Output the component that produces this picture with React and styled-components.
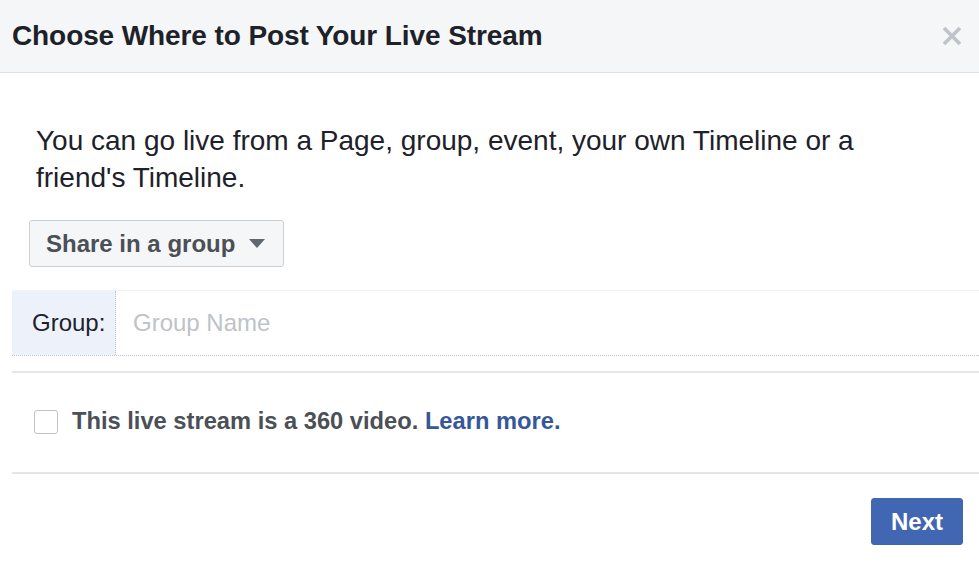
import styled, { createGlobalStyle } from "styled-components";

const Global = createGlobalStyle`
  body {
    margin: 0;
    background: #fff;
    font-family: "Liberation Sans", Arial, sans-serif;
    color: #1d2129;
  }
`;

const Dialog = styled.div`
  width: 979px;
  height: 562px;
  overflow: hidden;
  background: #fff;
`;

const Header = styled.div`
  height: 72px;
  display: flex;
  align-items: center;
  justify-content: space-between;
  padding: 0 16px 0 12px;
  background: #f5f6f7;
  border-bottom: 1px solid #dddfe2;
`;

const Title = styled.h1`
  margin: 0;
  font-size: 28px;
  font-weight: bold;
  color: #1d2129;
  letter-spacing: -0.1px;
`;

const Close = styled.button`
  border: none;
  background: none;
  padding: 0;
  width: 22px;
  height: 22px;
  display: flex;
  align-items: center;
  justify-content: center;
  cursor: pointer;
`;

const Body = styled.div`
  padding-left: 12px;
`;

const Intro = styled.p`
  margin: 49px 0 0 24px;
  font-size: 28px;
  line-height: 37px;
  color: #1d2129;
`;

const Dropdown = styled.button`
  margin: 24px 0 0 17px;
  height: 47px;
  padding: 0 18px 0 16px;
  display: inline-flex;
  align-items: center;
  gap: 14px;
  background: #f5f6f7;
  border: 1px solid #ccd0d5;
  border-radius: 3px;
  font-family: inherit;
  font-size: 24px;
  font-weight: bold;
  color: #4b4f56;
`;

const Caret = styled.span`
  width: 0;
  height: 0;
  border-left: 8px solid transparent;
  border-right: 8px solid transparent;
  border-top: 9px solid #606770;
`;

const FieldRow = styled.div`
  margin-top: 23px;
  display: flex;
  height: 64px;
  border-top: 1px solid #f2f3f5;
  border-bottom: 1px dotted #bec2c9;
`;

const FieldLabel = styled.label`
  width: 83px;
  padding-left: 20px;
  display: flex;
  align-items: center;
  background: #edf2fa;
  border-right: 1px dotted #bec2c9;
  font-size: 24px;
  color: #1d2129;
`;

const FieldInput = styled.input`
  flex: 1;
  border: none;
  outline: none;
  padding: 0 0 0 17px;
  font-family: inherit;
  font-size: 24px;
  color: #1d2129;
  caret-color: #000;
  background: transparent;
  &::placeholder {
    color: #bec2c9;
  }
`;

const Divider = styled.div`
  height: 2px;
  background: #e5e6e9;
  margin-top: ${(p) => p.$top}px;
`;

const CheckRow = styled.label`
  display: flex;
  align-items: center;
  gap: 14px;
  margin: 36px 0 0 22px;
  height: 25px;
  font-size: 23.7px;
  font-weight: bold;
  color: #4b4f56;
`;

const Box = styled.span`
  width: 22px;
  height: 22px;
  border: 1px solid #bec2c9;
  border-radius: 3px;
  background: #fff;
`;

const Link = styled.a`
  color: #365899;
  text-decoration: none;
`;

const Footer = styled.div`
  display: flex;
  justify-content: flex-end;
  padding: 24px 16px 0 0;
`;

const NextButton = styled.button`
  width: 92px;
  height: 47px;
  background: #4267b2;
  border: 1px solid #4267b2;
  border-radius: 3px;
  color: #fff;
  font-family: inherit;
  font-size: 24px;
  font-weight: bold;
`;

export default function App() {
  return (
    <Dialog>
      <Global />
      <Header>
        <Title>Choose Where to Post Your Live Stream</Title>
        <Close aria-label="Close">
          <svg width="20" height="20" viewBox="0 0 20 20">
            <path d="M2 2L18 18M18 2L2 18" stroke="#bec2c9" strokeWidth="3.6" strokeLinecap="butt" />
          </svg>
        </Close>
      </Header>
      <Body>
        <Intro>
          You can go live from a Page, group, event, your own Timeline or a
          <br />
          friend's Timeline.
        </Intro>
        <Dropdown>
          Share in a group
          <Caret />
        </Dropdown>
        <FieldRow>
          <FieldLabel>Group:</FieldLabel>
          <FieldInput placeholder="Group Name" autoFocus />
        </FieldRow>
        <Divider $top={15} />
        <CheckRow>
          <Box />
          <span>
            This live stream is a 360 video. <Link href="#">Learn more.</Link>
          </span>
        </CheckRow>
        <Divider $top={38} />
        <Footer>
          <NextButton>Next</NextButton>
        </Footer>
      </Body>
    </Dialog>
  );
}
